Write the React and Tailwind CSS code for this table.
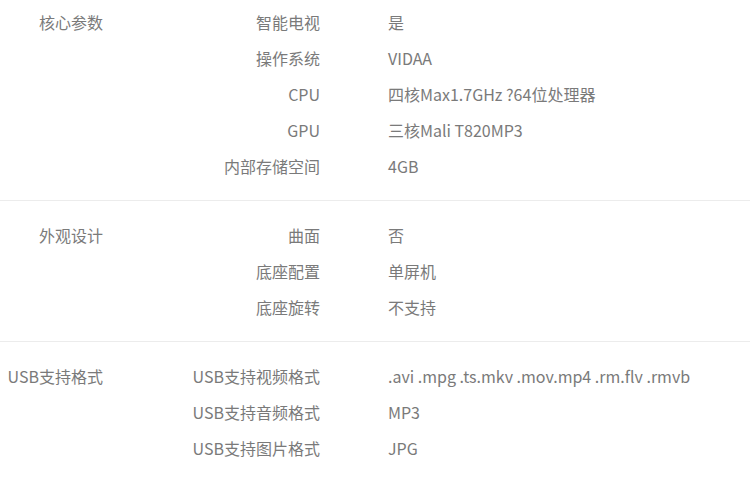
const groups = [
  {
    title: '核心参数',
    first: true,
    rows: [
      ['智能电视', '是'],
      ['操作系统', 'VIDAA'],
      ['CPU', '四核Max1.7GHz ?64位处理器'],
      ['GPU', '三核Mali T820MP3'],
      ['内部存储空间', '4GB'],
    ],
  },
  {
    title: '外观设计',
    rows: [
      ['曲面', '否'],
      ['底座配置', '单屏机'],
      ['底座旋转', '不支持'],
    ],
  },
  {
    title: 'USB支持格式',
    rows: [
      ['USB支持视频格式', '.avi .mpg .ts.mkv .mov.mp4 .rm.flv .rmvb'],
      ['USB支持音频格式', 'MP3'],
      ['USB支持图片格式', 'JPG'],
    ],
  },
];

const App = () => {
  return (
    <div className="h-[480px] w-[750px] overflow-hidden bg-white text-[16px] text-[#7a7a7a] font-['Noto_Sans_CJK_SC','Noto_Sans',sans-serif]">
      {groups.map((group) => (
        <div
          key={group.title}
          className={`flex border-b border-[#ececec] pb-[15px] ${group.first ? 'pt-[5px]' : 'pt-[17px]'}`}
        >
          <div className="flex h-[36px] w-[103px] shrink-0 items-center justify-end pb-[3px]">{group.title}</div>
          <div className="flex-1">
            {group.rows.map(([key, value]) => (
              <div key={key} className="flex h-[36px] items-center pb-[3px]">
                <div className="w-[217px] shrink-0 text-right">{key}</div>
                <div className="pl-[68px]">{value}</div>
              </div>
            ))}
          </div>
        </div>
      ))}
    </div>
  );
};

export default App;
